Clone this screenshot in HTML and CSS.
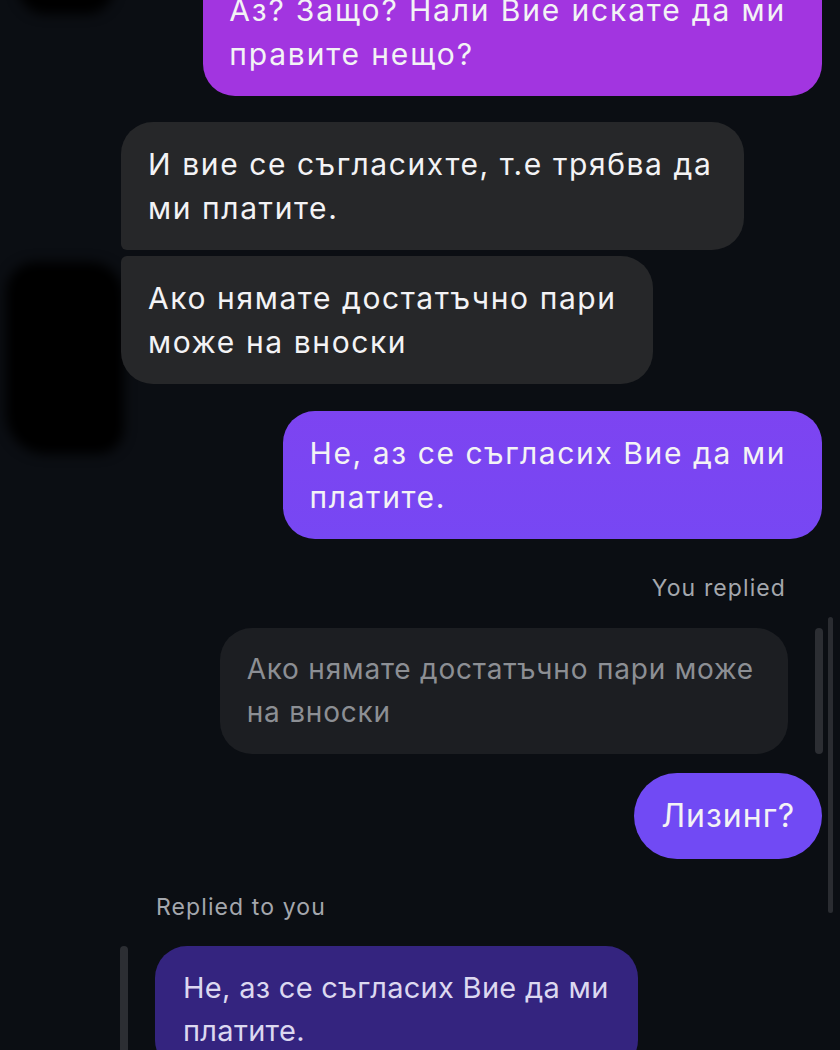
FILE: index.html
```html
<!DOCTYPE html>
<html lang="bg">
<head>
  <meta charset="UTF-8" />
  <meta name="viewport" content="width=device-width, initial-scale=1.0"/>
  <title>Chat</title>
  <link rel="stylesheet" href="styles.css">
</head>
<body>

  <div class="chat">
    <div class="row out">
      <div class="bubble sent violet">Аз? Защо? Нали Вие искате да ми<br>правите нещо?</div>
    </div>

    <div class="row in group-top">
      <div class="bubble recv first">И вие се съгласихте, т.е трябва да<br>ми платите.</div>
    </div>
    <div class="row in">
      <div class="bubble recv last">Ако нямате достатъчно пари<br>може на вноски</div>
    </div>

    <div class="row out spaced">
      <div class="bubble sent purple">Не, аз се съгласих Вие да ми<br>платите.</div>
    </div>

    <div class="reply-label right">You replied</div>
    <div class="row out quote-row">
      <div class="quote">Ако нямате достатъчно пари може<br>на вноски</div>
      <div class="quote-bar"></div>
    </div>
    <div class="row out">
      <div class="bubble sent indigo pill">Лизинг?</div>
    </div>

    <div class="reply-label left">Replied to you</div>
    <div class="row in quote-row">
      <div class="quote-bar"></div>
      <div class="quote dim">Не, аз се съгласих Вие да ми<br>платите.</div>
    </div>
  </div>

  <!-- redacted avatars -->
  <div class="blot blot-top"></div>
  <div class="blot blot-mid"></div>

  <div class="scroll-thumb"></div>

</body>
</html>
```

FILE: styles.css
```css
body {
  margin: 0;
  background: #0b0e13;
  font-family: Inter, "Noto Sans", sans-serif;
  color: #f3f3f5;
  overflow: hidden;
  height: 1050px;
}

.chat {
  padding: 0 18px 0 120px;
  margin-top: -32px;
  display: flex;
  flex-direction: column;
  position: relative;
  z-index: 2;
}

.row {
  display: flex;
}

.row.out {
  justify-content: flex-end;
}

.row.in {
  justify-content: flex-start;
}

.group-top {
  margin-top: 26px;
  margin-bottom: 6px;
}

.spaced {
  margin-top: 27px;
}

.bubble {
  font-size: 30px;
  line-height: 44px;
  letter-spacing: 1.6px;
  padding: 20px 36px 20px 27px;
  border-radius: 32px;
  white-space: nowrap;
}

.recv {
  background: #262729;
  margin-left: 1px;
}

.recv.first {
  border-bottom-left-radius: 6px;
  padding-right: 32px;
}

.recv.last {
  border-top-left-radius: 6px;
}

.violet {
  background: #a235e0;
  letter-spacing: 1.85px;
  padding-left: 26px;
}

.purple {
  background: linear-gradient(180deg, #7d44f1, #7747f3);
}

.indigo {
  background: #714af4;
}

.pill {
  font-size: 32px;
  letter-spacing: 1px;
  padding: 21px 27px;
  border-radius: 43px;
}

.reply-label {
  font-size: 23px;
  letter-spacing: 1.1px;
  color: #a4a7ad;
  line-height: 28px;
}

.reply-label.right {
  margin-top: 35px;
  align-self: flex-end;
  margin-right: 36px;
}

.reply-label.left {
  margin-top: 34px;
  margin-left: 36px;
}

.quote-row {
  margin-top: 26px;
  margin-bottom: 19px;
  align-items: stretch;
}

.quote {
  font-size: 28px;
  line-height: 43px;
  letter-spacing: 0.8px;
  padding: 20px 34px 20px 27px;
  border-radius: 32px;
  background: #1c1e22;
  color: #8c8f94;
  white-space: nowrap;
}

.quote.dim {
  background: #34247f;
  color: #dcd8f0;
  font-size: 29px;
  letter-spacing: 0.3px;
  padding: 20px 29px 20px 28px;
}

.row.in.quote-row {
  margin-top: 25px;
}

.quote-bar {
  width: 8px;
  border-radius: 4px;
  background: #2c2e33;
}

.row.out .quote-bar {
  margin-left: 27px;
  margin-right: -1px;
}

.row.in .quote-bar {
  margin-right: 27px;
}

.blot {
  position: absolute;
  background: #000;
  filter: blur(6px);
  z-index: 1;
}

.blot-top {
  left: 18px;
  top: -40px;
  width: 96px;
  height: 54px;
  border-radius: 40px;
}

.blot-mid {
  left: 6px;
  top: 262px;
  width: 118px;
  height: 192px;
  border-radius: 30px 34px 26px 40px;
}

.scroll-thumb {
  position: absolute;
  left: 828px;
  top: 617px;
  width: 5px;
  height: 296px;
  border-radius: 3px;
  background: #2a2c31;
  z-index: 3;
}
```
